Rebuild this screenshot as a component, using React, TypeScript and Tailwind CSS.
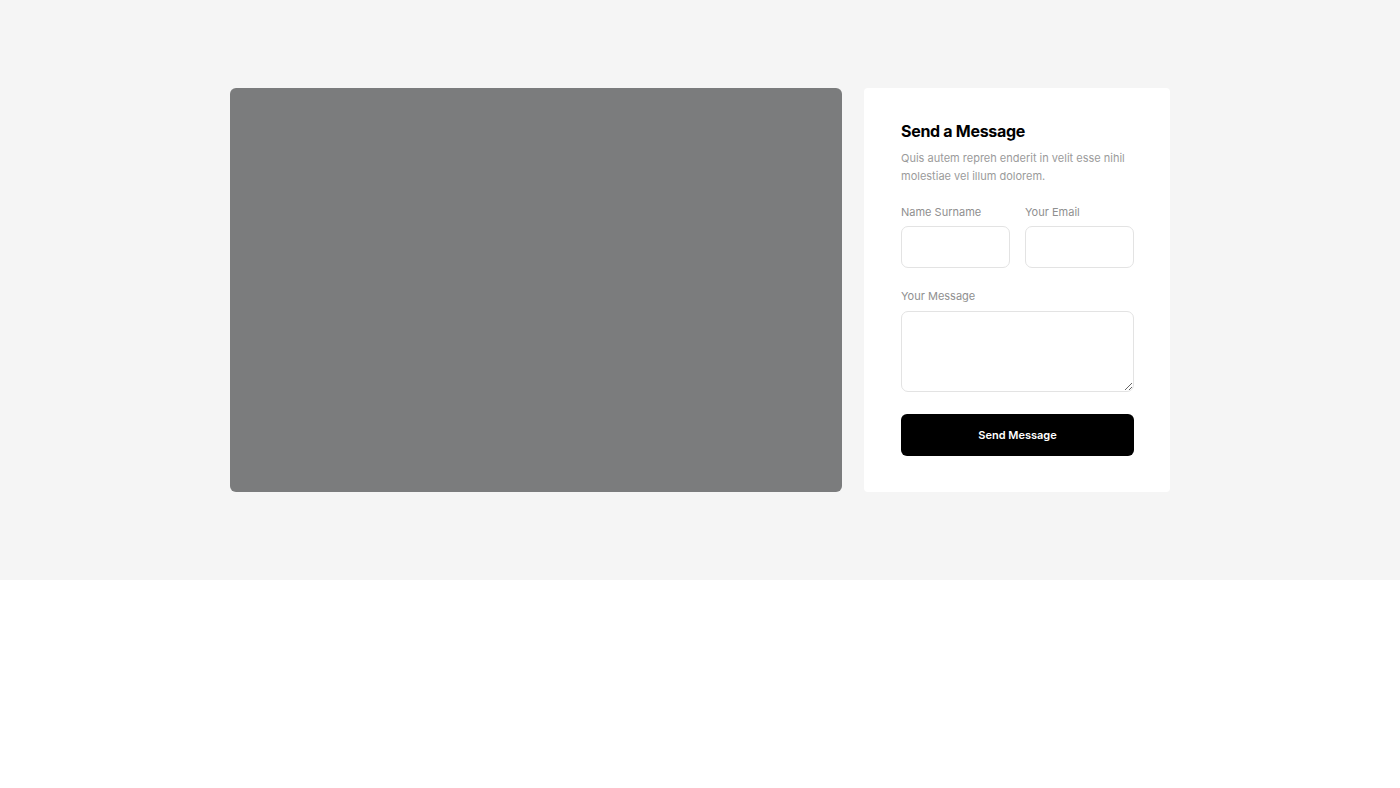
export default function App() {
  return (
    <div className="min-h-screen bg-white" style={{ fontFamily: 'Inter, "Noto Sans", sans-serif' }}>
      <section className="bg-[#f5f5f5] py-[88px]">
        <div className="mx-auto flex w-[940px] gap-[22px]">
          {/* Map placeholder */}
          <div className="h-[404px] w-[612px] rounded-[6px] bg-[#7b7c7d]" />

          {/* Contact form */}
          <div className="flex h-[404px] w-[306px] flex-col rounded-[4px] bg-white pl-[37px] pr-[36px] pt-[31px]">
            <h2 className="text-[16px] font-bold leading-[24px] tracking-[-0.3px] text-black">
              Send a Message
            </h2>
            <p className="mt-[6px] text-[11px] leading-[18px] text-[#9b9b9b]">
              Quis autem repreh enderit in velit esse nihil molestiae vel illum dolorem.
            </p>

            <div className="mt-[19px] flex gap-[15px]">
              <label className="flex w-[109px] flex-col">
                <span className="text-[11px] leading-[16px] text-[#8f8f8f]">Name Surname</span>
                <input className="mt-[6px] h-[42px] w-full rounded-[7px] border border-[#e3e3e3] bg-white px-3 text-sm outline-none" />
              </label>
              <label className="flex w-[109px] flex-col">
                <span className="text-[11px] leading-[16px] text-[#8f8f8f]">Your Email</span>
                <input className="mt-[6px] h-[42px] w-full rounded-[7px] border border-[#e3e3e3] bg-white px-3 text-sm outline-none" />
              </label>
            </div>

            <label className="mt-[20px] flex flex-col">
              <span className="text-[11px] leading-[16px] text-[#8f8f8f]">Your Message</span>
              <textarea className="mt-[7px] h-[81px] w-full rounded-[7px] border border-[#e3e3e3] bg-white px-3 py-2 text-sm outline-none" />
            </label>

            <button className="mt-[22px] h-[42px] w-full rounded-[6px] bg-black text-[11px] font-semibold text-white">
              Send Message
            </button>
          </div>
        </div>
      </section>
    </div>
  );
}
